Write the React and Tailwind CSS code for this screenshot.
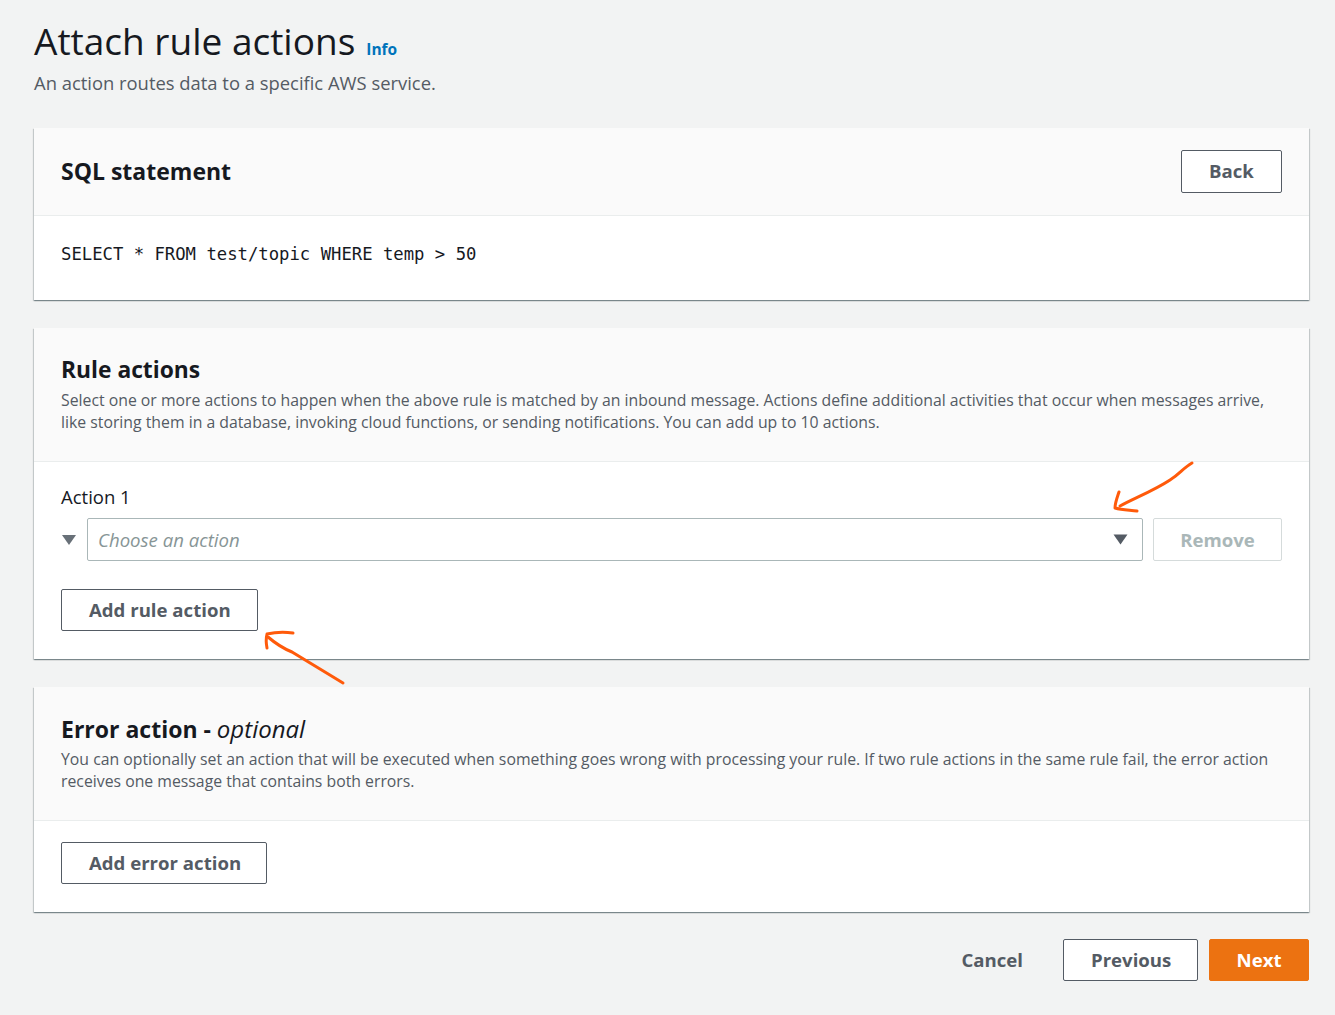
import React from "react";

const font = { fontFamily: '"Open Sans", "Noto Sans", sans-serif' };

function Card({ children }) {
  return (
    <div className="bg-white shadow-[0_1px_1px_0_rgba(0,28,36,0.3),1px_1px_1px_0_rgba(0,28,36,0.15),-1px_1px_1px_0_rgba(0,28,36,0.15)]">
      {children}
    </div>
  );
}

function Btn({ children, className = "" }) {
  return (
    <button
      className={
        "whitespace-nowrap rounded-[2px] border border-[#545b64] bg-white px-[27px] text-[18.6px] font-bold leading-[24px] text-[#545b64] " +
        className
      }
    >
      {children}
    </button>
  );
}

export default function App() {
  return (
    <div
      className="relative min-h-[1015px] bg-[#f2f3f3] pl-[34px] pr-[26px] pt-[17px] text-[#16191f]"
      style={font}
    >
      <div className="flex items-baseline gap-[11px]">
        <h1 className="text-[37px] leading-[47px] font-normal text-[#16191f]">Attach rule actions</h1>
        <span className="text-[15.5px] font-bold text-[#0073bb]">Info</span>
      </div>
      <p className="mt-[5px] text-[18.4px] leading-[28px] text-[#545b64]">
        An action routes data to a specific AWS service.
      </p>

      <div className="mt-[31px] flex flex-col gap-[28px]">
        <Card>
          <div className="flex items-center justify-between border-b border-[#eaeded] bg-[#fafafa] px-[27px] py-[22px]">
            <h2 className="-mt-[2px] text-[23px] font-bold leading-[28px]">SQL statement</h2>
            <Btn className="h-[43px] w-[101px] px-0 pb-[2px]">Back</Btn>
          </div>
          <div
            className="px-[27px] pt-[26px] pb-[34px] text-[17.25px] leading-[24px]"
            style={{ fontFamily: '"DejaVu Sans Mono", monospace' }}
          >
            SELECT * FROM test/topic WHERE temp &gt; 50
          </div>
        </Card>

        <Card>
          <div className="border-b border-[#eaeded] bg-[#fafafa] px-[27px] pt-[28px] pb-[28px]">
            <h2 className="text-[22.8px] font-bold leading-[28px]">Rule actions</h2>
            <p className="mt-[5px] text-[15.8px] leading-[22px] text-[#545b64]">
              Select one or more actions to happen when the above rule is matched by an inbound message. Actions define additional activities that occur when messages arrive, like storing them in a database, invoking cloud functions, or sending notifications. You can add up to 10 actions.
            </p>
          </div>
          <div className="px-[27px] pt-[24px] pb-[28px]">
            <div className="text-[18.5px] leading-[22px]">Action 1</div>
            <div className="mt-[10px] flex items-center gap-[10px]">
              <svg width="16" height="12" viewBox="0 0 16 12" className="shrink-0">
                <path d="M1 1 L15 1 L8 11 Z" fill="#687078" />
              </svg>
              <div className="flex h-[43px] flex-1 items-center justify-between rounded-[2px] border border-[#aab7b8] bg-white pl-[10px] pr-[14px]">
                <span className="text-[18.6px] italic text-[#879596]">Choose an action</span>
                <svg width="15" height="11" viewBox="0 0 15 11">
                  <path d="M0.5 0.5 L14.5 0.5 L7.5 10.5 Z" fill="#545b64" />
                </svg>
              </div>
              <button className="h-[43px] w-[129px] whitespace-nowrap rounded-[2px] border border-[#d5dbdb] bg-white text-[18.6px] font-bold text-[#aab7b8]">
                Remove
              </button>
            </div>
            <Btn className="mt-[28px] h-[42px] w-[197px] px-0">Add rule action</Btn>
          </div>
        </Card>

        <Card>
          <div className="border-b border-[#eaeded] bg-[#fafafa] px-[27px] pt-[28px] pb-[28px]">
            <h2 className="text-[23px] font-bold leading-[28px]">
              Error action - <span className="text-[24px] font-normal italic">optional</span>
            </h2>
            <p className="mt-[5px] text-[15.8px] leading-[22px] text-[#545b64]">
              You can optionally set an action that will be executed when something goes wrong with processing your rule. If two rule actions in the same rule fail, the error action receives one message that contains both errors.
            </p>
          </div>
          <div className="px-[27px] pt-[21px] pb-[28px]">
            <Btn className="h-[42px] w-[206px] px-0">Add error action</Btn>
          </div>
        </Card>
      </div>

      <div className="mt-[27px] flex items-center justify-end">
        <button className="mr-[40px] text-[18.6px] font-bold text-[#545b64]">Cancel</button>
        <Btn className="h-[42px] w-[135px] px-0">Previous</Btn>
        <button className="ml-[11px] h-[42px] w-[100px] rounded-[2px] border border-[#ec7211] bg-[#ec7211] text-[18.6px] font-bold text-white">
          Next
        </button>
      </div>

      <svg
        className="pointer-events-none absolute left-0 top-0"
        width="1335"
        height="1015"
        viewBox="0 0 1335 1015"
        fill="none"
        stroke="#ff5a0a"
        strokeWidth="3"
        strokeLinecap="round"
        strokeLinejoin="round"
      >
        <path d="M1192 463 C1183 468 1180 474 1170 480 C1155 490 1135 498 1120 506" />
        <path d="M1119 492 C1117 498 1115 503 1115 508 C1122 510 1130 510 1137 511" />
        <path d="M268 637 C275 643 282 648 292 652 C305 660 325 672 343 683" />
        <path d="M267 648 C266 643 266 638 267 634 C276 632 285 632 293 633" />
      </svg>
    </div>
  );
}
